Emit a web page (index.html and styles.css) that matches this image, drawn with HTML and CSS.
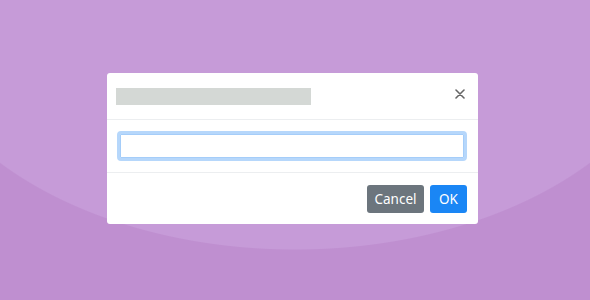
FILE: index.html
```html
<!doctype html>
<html lang="en">
<head>
<meta charset="utf-8">
<meta name="viewport" content="width=device-width, initial-scale=1">
<title>Prompt</title>
<link rel="stylesheet" href="styles.css">
</head>
<body>

	<div class="stage">

		<div class="modal">

			<div class="modal-header">
				<div class="title-mask"></div>
				<button class="close" title="Close">
					<svg width="10" height="10" viewBox="0 0 10 10">
						<path d="M1 1 L9 9 M9 1 L1 9" stroke="#666" stroke-width="1.6" stroke-linecap="round" />
					</svg>
				</button>
			</div>

			<div class="modal-body">
				<input class="prompt-input" type="text">
			</div>

			<div class="modal-footer">
				<button class="btn btn-cancel">Cancel</button>
				<button class="btn btn-ok">OK</button>
			</div>

		</div>

	</div>

</body>
</html>
```

FILE: styles.css
```css
html, body { height: 100%; }
body {
	margin: 0;
	font: 14px "Open Sans", "Noto Sans", sans-serif;
	background: #bf8fd0 radial-gradient(ellipse 390px 250px at 295px 0, #c69bd8 99.6%, #bf8fd0 100%) no-repeat;
	overflow: hidden;
}

.stage { padding: 73px 0 0 107px; }

.modal { background: #fff; border-radius: 3px; width: 371px; }

.modal-header { align-items: center; border-bottom: 1px solid #eceef0; box-sizing: border-box; display: flex; height: 47px; justify-content: space-between; padding: 0 11px 0 9px; }
.title-mask { background: #d4d8d5; height: 17px; margin-top: 1px; width: 195px; }
.close { background: none; border: none; cursor: pointer; display: flex; margin-top: -4px; padding: 0 2px; }

.modal-body { border-bottom: 1px solid #eceef0; padding: 11px 11px 11px 10px; }
.prompt-input { border: 3px solid #b6d7fb; border-radius: 4px; box-shadow: inset 0 0 0 1px #a5cdf9; box-sizing: border-box; display: block; height: 30px; outline: none; width: 100%; }

.modal-footer { display: flex; gap: 6px; justify-content: flex-end; padding: 12px 11px 11px; }
.btn { border: none; border-radius: 3px; color: #fff; cursor: pointer; font: 13.5px "Noto Sans", "Open Sans", sans-serif; height: 28px; padding: 0; text-align: center; }
.btn-cancel { background: #6c757d; width: 57px; }
.btn-ok { background: #1a86f5; width: 37px; }
```
